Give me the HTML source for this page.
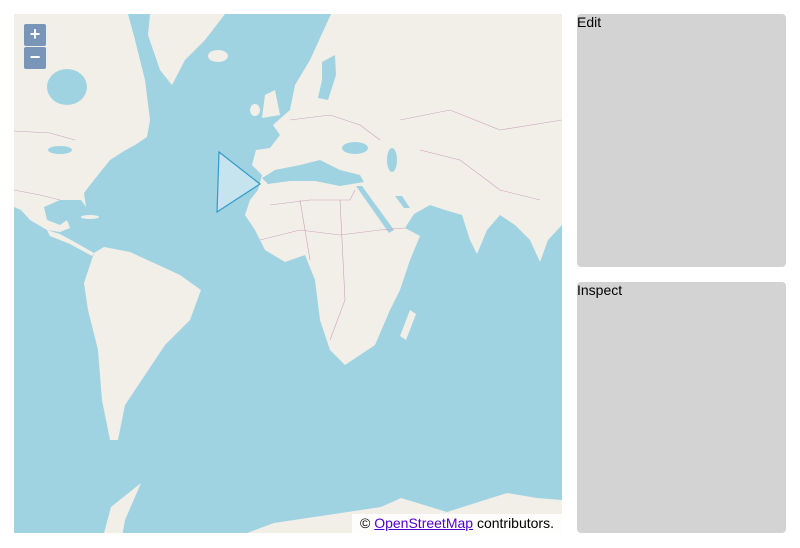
<!DOCTYPE html>
<html><head><style>
body{margin:0;width:800px;height:548px;background:#fff;font-family:"Liberation Sans",sans-serif;position:relative;overflow:hidden}
#map{position:absolute;left:14px;top:14px;width:548px;height:519px;overflow:hidden;background:#aad3df}
svg{position:absolute;left:-14px;top:-14px}
.zc{position:absolute;left:10px;top:10px;width:22px}
.zc div{width:22px;height:22px;background:rgba(0,60,136,.5);color:#fff;font-size:18px;font-weight:bold;text-align:center;line-height:21px;margin-bottom:1px;border-radius:2px}
.attr{position:absolute;right:0;bottom:0;background:rgba(255,255,255,.85);font-size:14px;padding:1px 8px 2px 8px;color:#000}
.attr a{color:#5200cc;text-decoration:underline}
.panel{position:absolute;left:577px;width:209px;background:#d3d3d3;border-radius:4px;font-size:14px;color:#000;line-height:16px}
</style></head><body>
<div id="map">
<svg width="800" height="548" viewBox="0 0 800 548">
<rect x="0" y="0" width="800" height="548" fill="#a0d3e1"/>
<g fill="#f2efe9">
<polygon points="150,14 225,14 205,40 185,60 172,85 160,70 148,35"/>
<ellipse cx="218" cy="56" rx="10" ry="6"/>
<polygon points="14,14 128,14 135,40 145,80 150,120 147,137 135,145 124,151 110,160 94,180 84,193 86,207 81,200 60,200 44,207 47,220 60,225 67,220 70,228 60,232 47,230 30,220 21,210 14,207"/>
<polygon points="47,230 60,234 71,240 94,253 92,256 70,244 50,236"/>
<ellipse cx="90" cy="217" rx="9" ry="2"/>
<polygon points="94,253 104,247 130,252 154,263 180,275 201,290 190,320 165,345 145,375 125,405 118,440 110,440 102,400 98,350 88,310 84,283 90,265"/>
<polygon points="331,14 562,14 562,225 548,240 540,262 530,240 515,225 500,215 487,230 477,254 470,240 462,215 445,210 430,205 414,214 405,228 420,236 410,260 400,290 390,310 375,345 345,365 330,350 320,320 315,280 305,255 285,262 265,250 255,230 245,215 250,200 258,190 262,175 252,165 256,150 270,148 280,135 273,125 290,110 295,85 310,60"/>
<polygon points="265,95 275,90 280,115 262,118"/>
<ellipse cx="255" cy="110" rx="5" ry="6"/>
<polygon points="410,310 416,314 406,340 400,336"/>
<polygon points="100,548 111,507 141,483 125,520 120,548"/>
<polygon points="240,548 247,533 274,523 381,507 401,498 447,512 507,493 537,498 562,500 600,548"/>
</g>
<g fill="#a0d3e1">
<ellipse cx="67" cy="87" rx="20" ry="18"/>
<polygon points="262,178 275,170 300,165 320,160 340,170 360,175 364,182 340,186 315,181 290,181 268,184"/>
<ellipse cx="355" cy="148" rx="13" ry="6"/>
<ellipse cx="392" cy="160" rx="5" ry="12"/>
<polygon points="356,186 362,186 394,230 389,233"/>
<polygon points="395,196 402,196 410,208 404,208"/>
<polygon points="322,62 335,55 336,75 328,100 318,98 322,80"/>
<ellipse cx="60" cy="150" rx="12" ry="4"/>
</g>
<g fill="none" stroke="#c9a3b8" stroke-width="0.6">
<polyline points="14,190 40,195 60,200"/>
<polyline points="14,131 50,133 75,140"/>
<polyline points="270,205 310,200 350,200 355,190"/>
<polyline points="260,240 300,230 340,235 380,230 405,228"/>
<polyline points="300,200 310,260"/>
<polyline points="340,200 345,300 330,340"/>
<polyline points="400,120 450,110 500,130 562,120"/>
<polyline points="420,150 460,160 500,190 540,200"/>
<polyline points="290,120 330,115 360,125 380,140"/>
</g>
<polygon points="219,152 260,184 217,212" fill="rgba(255,255,255,0.4)" stroke="#3399cc" stroke-width="1.2"/>
</svg>
<div class="zc"><div>+</div><div>−</div></div>
<div class="attr">© <a>OpenStreetMap</a> contributors.</div>
</div>
<div class="panel" style="top:14px;height:253px">Edit</div>
<div class="panel" style="top:282px;height:251px">Inspect</div>
</body></html>
